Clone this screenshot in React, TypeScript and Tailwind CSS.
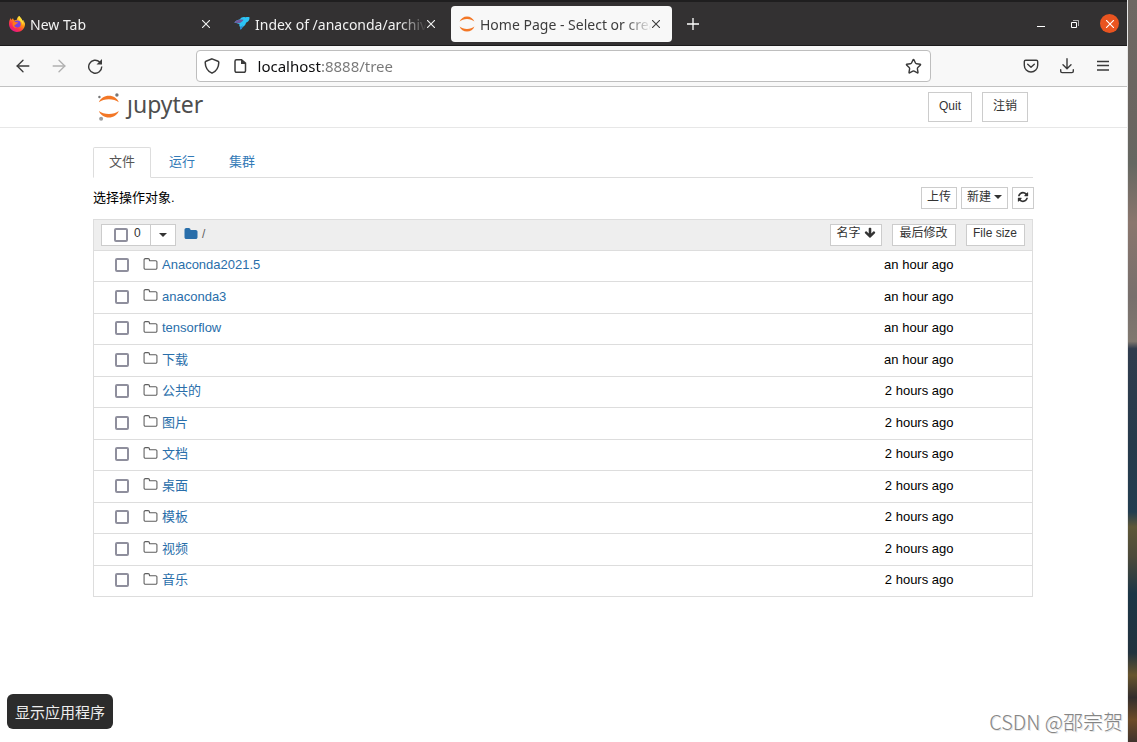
import { useState, type ReactNode } from 'react'
import { ArrowLeft, ArrowRight, Star } from 'lucide-react'

interface FileEntry {
  name: string
  modified: string
}

const files: FileEntry[] = [
  { name: 'Anaconda2021.5', modified: 'an hour ago' },
  { name: 'anaconda3', modified: 'an hour ago' },
  { name: 'tensorflow', modified: 'an hour ago' },
  { name: '下载', modified: 'an hour ago' },
  { name: '公共的', modified: '2 hours ago' },
  { name: '图片', modified: '2 hours ago' },
  { name: '文档', modified: '2 hours ago' },
  { name: '桌面', modified: '2 hours ago' },
  { name: '模板', modified: '2 hours ago' },
  { name: '视频', modified: '2 hours ago' },
  { name: '音乐', modified: '2 hours ago' },
]

// Font Awesome 4 glyphs, all on a 1792 grid
const glyphs = {
  folder:
    'M1728 608v704q0 92-66 158t-158 66h-1216q-92 0-158-66t-66-158v-960q0-92 66-158t158-66h320q92 0 158 66t66 158v32h672q92 0 158 66t66 158z',
  folderOpen:
    'M1600 1312v-704q0-40-28-68t-68-28h-704q-40 0-68-28t-28-68v-64q0-40-28-68t-68-28h-320q-40 0-68 28t-28 68v960q0 40 28 68t68 28h1216q40 0 68-28t28-68zm128-704v704q0 92-66 158t-158 66h-1216q-92 0-158-66t-66-158v-960q0-92 66-158t158-66h320q92 0 158 66t66 158v32h672q92 0 158 66t66 158z',
  arrowDown:
    'M1675 832q0 53-37 90l-651 652q-39 37-91 37-53 0-90-37l-651-652q-38-36-38-90 0-53 38-91l74-75q39-37 91-37 53 0 90 37l294 294v-704q0-52 38-90t90-38h128q52 0 90 38t38 90v704l294-294q37-37 90-37 52 0 91 37l75 75q37 39 37 91z',
  refresh:
    'M1639 1056q0 5-1 7-64 268-268 434.5t-478 166.5q-146 0-282.5-55t-243.5-157l-129 129q-19 19-45 19t-45-19-19-45v-448q0-26 19-45t45-19h448q26 0 45 19t19 45-19 45l-137 137q71 66 161 102t187 36q134 0 250-65t186-179q11-17 53-117 8-23 30-23h192q13 0 22.5 9.5t9.5 22.5zm25-800v448q0 26-19 45t-45 19h-448q-26 0-45-19t-19-45 19-45l138-138q-148-137-349-137-134 0-250 65t-186 179q-11 17-53 117-8 23-30 23h-199q-13 0-22.5-9.5t-9.5-22.5v-7q65-268 270-434.5t480-166.5q146 0 284 55.5t245 156.5l130-129q19-19 45-19t45 19 19 45z',
}

function Glyph({ name, className }: { name: keyof typeof glyphs; className: string }) {
  return (
    <svg className={`shrink-0 ${className}`} viewBox="0 0 1792 1792" fill="currentColor" aria-hidden="true">
      <path d={glyphs[name]} />
    </svg>
  )
}

function Caret() {
  return (
    <svg className="h-1 w-2 shrink-0" viewBox="0 0 8 4" fill="currentColor" aria-hidden="true">
      <path d="M0 0h8L4 4z" />
    </svg>
  )
}

function FirefoxIcon() {
  return (
    <svg className="size-4 shrink-0" viewBox="0 0 16 16" aria-hidden="true">
      <defs>
        <linearGradient id="fox" x1="0.8" y1="0.1" x2="0.2" y2="0.9">
          <stop offset="0" stopColor="#fff44f" />
          <stop offset="0.35" stopColor="#ff980e" />
          <stop offset="0.7" stopColor="#ff3647" />
          <stop offset="1" stopColor="#e31587" />
        </linearGradient>
      </defs>
      <path
        d="M15.4 6.2c-.3-.9-1-1.800-1.700-2.100.5 1 .8 1.900.9 2.500-.9-2.200-2.400-3.100-3.600-5L10.200 0C8.600.9 8 2.700 7.900 3.700c-.9 0-1.700.3-2.400.7-.8-.3-1.300-1.200-1.400-2.200C3.300 2.600 2.600 3.300 2.200 4c-.3-.3-.3-1.600-.3-1.900C.7 3.200 0 5.500 0 8.100 0 12.500 3.600 16 8 16s8-3.500 8-8c0-.600-.2-1.200-.6-1.800z"
        fill="url(#fox)"
      />
      <circle cx="8.300" cy="8" r="3.400" fill="#7542e5" />
      <path d="M4 6.200c1.200-.8 2.400-.7 3.400.1l1.800.2c0 .7-.9 1-1.700 1.200-.6.900-1.300 1.400-2.300 1.600.2 1.500 1.600 2.400 3 2.300-3 1.300-5.700-2.100-4.200-5.400z" fill="#ff7a18" />
      <path d="M10.200 0c2.700 2.800 4.400 5.300 3.800 9.300-.3-2.300-1.600-4.300-3.900-5.400C9.200 3.300 9.400 1.400 10.200 0z" fill="#ffde3a" />
    </svg>
  )
}

function AnacondaIcon() {
  return (
    <svg className="size-4 shrink-0" viewBox="0 0 16 16" aria-hidden="true">
      <path d="M.3 6.500C2 4.500 4 3.700 6 3.300 7 1.500 9 .8 11 1.200c1.500.1 3-.3 4.500 0 .3 2.500-.8 4.300-3.500 5.600-.2 1.800-1.500 3.200-3.700 4.600-.5 1-.9 1.700-1.800 2.100-.5-.8-.4-1.700-.2-2.700-1-.3-1.200-1.200-.8-2.600C4 7.700 2 7 .3 6.500z" fill="#2cc4f5" />
      <path d="M.3 6.500C2.500 4 5.500 3.200 9.500 3.800 8.500 5.700 7.300 6.300 5.600 7.200 3.800 7.300 2 7 .3 6.500z" fill="#6e5a9e" />
      <path d="M6.300 10.800c1-.2 1.700-.8 2.500-1.800l-.5 2.400c-.5 1-.9 1.700-1.800 2.100-.5-.8-.4-1.700-.2-2.700z" fill="#2f86cf" />
    </svg>
  )
}

function JupyterIcon() {
  return (
    <svg className="size-4 shrink-0" viewBox="0 0 16 16" fill="#f37726" aria-hidden="true">
      <path d="M.6 5.600C1.800 2.400 4.600.4 8 .4s6.200 2 7.400 5.200C13.500 4 11 3.100 8 3.100S2.500 4 .6 5.600z" />
      <path d="M.6 10.400c1.200 3.200 4 5.200 7.400 5.200s6.200-2 7.400-5.200c-1.900 1.600-4.400 2.500-7.400 2.500s-5.500-.9-7.400-2.500z" />
    </svg>
  )
}

function CloseMark() {
  return (
    <svg className="size-2" viewBox="0 0 8 8" stroke="currentColor" strokeWidth="1.1" aria-hidden="true">
      <path d="M0 0l8 8M8 0L0 8" />
    </svg>
  )
}

interface BrowserTabProps {
  title: string
  icon: ReactNode
  active?: boolean
}

function BrowserTab({ title, icon, active = false }: BrowserTabProps) {
  return (
    <div
      className={`flex h-9 w-[221px] items-center rounded pr-3 pl-2 ${
        active ? 'bg-[#f8f8f8] text-[#3d3d3d]' : 'text-[#f2f2f2]'
      }`}
    >
      {icon}
      <button
        type="button"
        className="ml-[5px] min-w-0 flex-1 overflow-hidden pt-0.5 text-left text-sm whitespace-nowrap [mask-image:linear-gradient(to_right,#000_calc(100%-28px),transparent)]"
      >
        {title}
      </button>
      <button type="button" aria-label={`Close ${title}`}>
        <CloseMark />
      </button>
    </div>
  )
}

function TitleBar() {
  return (
    <header className="flex h-[46px] items-center border-t-2 border-b border-t-[#1f1e1f] border-b-[#1c1b1c] bg-[#333132] pl-px text-white">
      <div className="flex gap-1">
        <BrowserTab title="New Tab" icon={<FirefoxIcon />} />
        <BrowserTab title="Index of /anaconda/archive" icon={<AnacondaIcon />} />
        <BrowserTab title="Home Page - Select or create" icon={<JupyterIcon />} active />
      </div>
      <button type="button" className="ml-[15px]" aria-label="New tab">
        <svg className="size-3" viewBox="0 0 12 12" stroke="currentColor" strokeWidth="1.300" aria-hidden="true">
          <path d="M6 0v12M0 6h12" />
        </svg>
      </button>
      <div className="ml-auto flex items-center pr-2">
        <button type="button" className="flex size-[34px] items-center justify-center" aria-label="Minimize">
          <svg className="size-2" viewBox="0 0 8 8" fill="currentColor" aria-hidden="true">
            <path d="M0 6h8v1H0z" />
          </svg>
        </button>
        <button type="button" className="mr-2 flex size-[34px] items-center justify-center" aria-label="Restore">
          <svg className="size-2" viewBox="0 0 8 8" fill="none" stroke="currentColor" aria-hidden="true">
            <path d="M.5 2.500h5v5h-5z" />
            <path d="M2 .5h5.500V6" opacity="0.600" />
          </svg>
        </button>
        <button
          type="button"
          className="flex size-[19px] items-center justify-center rounded-full bg-[#e95420]"
          aria-label="Close window"
        >
          <CloseMark />
        </button>
      </div>
    </header>
  )
}

function Toolbar() {
  const [url, setUrl] = useState('localhost:8888/tree')

  return (
    <div className="flex h-[41px] items-center border-b border-[#c2c2c2] bg-[#f8f8f8] px-[15px] text-[#3a3a3a]">
      <nav className="flex flex-1 gap-5">
        <button type="button" aria-label="Back">
          <ArrowLeft className="size-4 scale-125" strokeWidth={1.6} />
        </button>
        <button type="button" className="text-[#b0b0b0]" aria-label="Forward">
          <ArrowRight className="size-4 scale-125" strokeWidth={1.6} />
        </button>
        <button type="button" aria-label="Reload">
          <svg className="size-4" viewBox="0 0 16 16" fill="none" stroke="currentColor" strokeWidth="1.400" aria-hidden="true">
            <path d="M14.700 8.500A6.500 6.500 0 1 1 12.700 4" />
            <path d="M9.500 6.500h5.500V1z" fill="currentColor" stroke="none" />
          </svg>
        </button>
      </nav>
      <form
        className="flex h-8 w-[67%] items-center rounded border border-[#bebebe] bg-white pr-2 pl-[7px]"
        onSubmit={(e) => e.preventDefault()}
      >
        <svg className="size-4 shrink-0" viewBox="0 0 16 16" fill="none" stroke="currentColor" strokeWidth="1.500" aria-hidden="true">
          <path d="M8 .9l6 2.400c.5.200.8.600.8 1.100C14.700 9.500 12.500 13 8 15.200 3.500 13 1.300 9.500 1.200 4.400c0-.5.300-.9.8-1.100z" />
        </svg>
        <svg className="ml-3 size-4 shrink-0" viewBox="0 0 16 16" fill="none" stroke="currentColor" strokeWidth="1.500" aria-hidden="true">
          <path d="M9.500 1.700h-5a1.500 1.500 0 0 0-1.500 1.500v9.600a1.500 1.500 0 0 0 1.500 1.500h7.500a1.500 1.500 0 0 0 1.500-1.500V5.200z" />
          <path d="M9 1.200v4.800h5z" fill="currentColor" stroke="none" />
        </svg>
        <input
          type="text"
          aria-label="Address"
          value={url}
          onChange={(e) => setUrl(e.target.value)}
          className="ml-2.5 min-w-0 flex-1 bg-[linear-gradient(to_right,#0c0c0d_64px,#777_64px)] bg-clip-text text-[15px] text-transparent outline-none"
        />
        <button type="button" aria-label="Bookmark this page">
          <Star className="size-[17px]" strokeWidth={2} />
        </button>
      </form>
      <div className="flex flex-1 justify-end gap-5 pr-px">
        <button type="button" aria-label="Save to Pocket">
          <svg className="size-4" viewBox="0 0 16 16" fill="none" stroke="currentColor" strokeWidth="1.400" strokeLinecap="round" strokeLinejoin="round" aria-hidden="true">
            <path d="M2.700 2.200h10.600c.8 0 1.400.6 1.400 1.400v3.700a6.700 6.700 0 0 1-13.400 0V3.600c0-.8.600-1.400 1.400-1.400z" />
            <path d="M4.700 6.300L8 9.300l3.300-3" />
          </svg>
        </button>
        <button type="button" aria-label="Downloads">
          <svg className="size-4" viewBox="0 0 16 16" fill="none" stroke="currentColor" strokeWidth="1.400" strokeLinecap="round" strokeLinejoin="round" aria-hidden="true">
            <path d="M8 .8v9.700M4 6.800l4 3.900 4-3.900M1.700 11.700v1.500c0 .8.600 1.400 1.400 1.400h9.800c.8 0 1.400-.6 1.400-1.400v-1.500" />
          </svg>
        </button>
        <button type="button" aria-label="Menu">
          <svg className="size-4" viewBox="0 0 16 16" stroke="currentColor" strokeWidth="1.300" aria-hidden="true">
            <path d="M2 3.500h12M2 7.500h12M2 12h12" />
          </svg>
        </button>
      </div>
    </div>
  )
}

function JupyterLogo() {
  return (
    <a href="#" className="flex items-center gap-[7px] text-[#4e4e4e]" aria-label="jupyter">
      <svg className="h-7 w-[22px]" viewBox="0 0 22 28" aria-hidden="true">
        <path d="M.9 9.200C2.500 5.200 6.300 2.700 10.900 2.700s8.300 2.500 9.900 6.500c-2.500-2-6-3-9.900-3s-7.500 1-10 3z" fill="#f37726" />
        <path d="M.9 18c1.600 4 5.400 6.500 10 6.500s8.300-2.500 9.900-6.500c-2.500 2-6 3-9.900 3s-7.500-1-10-3z" fill="#f37726" />
        <circle cx="18.900" cy="2" r="1.700" fill="#767677" />
        <circle cx="1.400" cy="4" r="1.200" fill="#767677" />
        <circle cx="3.100" cy="25.700" r="2" fill="#9e9e9e" />
      </svg>
      <span className="pb-1.5 text-[23px] leading-7">ȷupyter</span>
    </a>
  )
}

const smallButton = 'flex h-[22px] items-center border border-[#ccc] bg-white px-[5px] text-xs text-[#333]'
const checkbox = 'size-3.5 shrink-0 appearance-none rounded-[2px] border-2 border-[#8f8f9d] bg-white checked:bg-[#0060df]'

function NotebookHeader() {
  const button = 'h-[30px] border border-[#ccc] bg-white px-2.5 pb-0.5 text-xs text-[#333]'
  return (
    <div className="border-b border-[#e7e7e7]">
      <div className="mx-auto flex h-10 w-full max-w-[941px] items-center justify-between pr-1.5 pl-[5px]">
        <JupyterLogo />
        <div className="flex gap-2.5 font-['Liberation_Sans','Noto_Sans_CJK_SC',sans-serif]">
          <button type="button" className={button}>
            Quit
          </button>
          <button type="button" className={button}>
            注销
          </button>
        </div>
      </div>
    </div>
  )
}

function NotebookTabs() {
  return (
    <ul className="mr-px flex gap-0.5 border-b border-[#ddd]">
      <li>
        <a
          href="#notebooks"
          className="-mb-px flex h-[31px] items-center rounded-t-[2px] border border-[#ddd] border-b-white bg-white px-[15px] pb-0.5 text-[#555]"
        >
          文件
        </a>
      </li>
      {['运行', '集群'].map((label) => (
        <li key={label}>
          <a href="#running" className="flex h-[30px] items-center px-4 pb-px text-[#337ab7]">
            {label}
          </a>
        </li>
      ))}
    </ul>
  )
}

function FileTable() {
  return (
    <table className="w-full border-collapse border border-[#ddd]">
      <thead>
        <tr className="h-[31px] bg-[#eee]">
          <th className="p-0 font-normal">
            <div className="flex items-center pl-[7px]">
              <div className="flex">
                <label className={`${smallButton} w-[50px] pl-3`}>
                  <input type="checkbox" className={checkbox} aria-label="Select all" />
                  <span className="ml-1.5 pb-1">0</span>
                </label>
                <button type="button" className={`${smallButton} -ml-px w-[26px] justify-center`} aria-label="Select menu">
                  <Caret />
                </button>
              </div>
              <a href="#home" className="ml-2 pb-0.5 text-[#296eaa]" aria-label="Home">
                <Glyph name="folder" className="size-3.5" />
              </a>
              <span className="ml-1 pb-0.5 text-xs text-[#5e5e5e]">/</span>
              <button type="button" className={`${smallButton} ml-auto gap-[3px] pb-1`}>
                名字
                <Glyph name="arrowDown" className="size-3" />
              </button>
            </div>
          </th>
          <th className="w-[74px] p-0 font-normal">
            <button type="button" className={`${smallButton} ml-auto w-16 justify-center pb-1 whitespace-nowrap`}>
              最后修改
            </button>
          </th>
          <th className="w-[77px] p-0 font-normal">
            <button type="button" className={`${smallButton} ml-2.5 w-[59px] justify-center pb-1 whitespace-nowrap`}>
              File size
            </button>
          </th>
        </tr>
      </thead>
      <tbody>
        {files.map((file) => (
          <tr key={file.name} className="border-t border-[#ddd] odd:h-[31px] even:h-8">
            <td className="p-0 pb-0.5">
              <div className="flex items-center pl-[21px]">
                <input type="checkbox" className={checkbox} aria-label={file.name} />
                <Glyph name="folderOpen" className="mb-0.5 ml-3.5 size-[15px] text-[#5e5e5e]" />
                <a href="#open" className="ml-1 text-[#296eaa]">
                  {file.name}
                </a>
              </div>
            </td>
            <td className="p-0 pr-0.5 pb-0.5 text-right whitespace-nowrap">{file.modified}</td>
            <td className="p-0" />
          </tr>
        ))}
      </tbody>
    </table>
  )
}

export default function App() {
  return (
    <div className="relative flex min-h-screen bg-white font-['Noto_Sans','Noto_Sans_CJK_SC',sans-serif]">
      <div className="min-w-0 flex-1">
        <TitleBar />
        <Toolbar />
        <NotebookHeader />
        <main className="mx-auto w-full max-w-[941px] pt-[19px] font-['Liberation_Sans','Noto_Sans_CJK_SC',sans-serif] text-[13px] leading-[18px] text-black">
          <NotebookTabs />
          <div className="flex items-center justify-between pt-[9px] pb-2.5">
            <p>选择操作对象.</p>
            <div className="flex gap-1">
              <button type="button" className={`${smallButton} pb-0.5`}>
                上传
              </button>
              <button type="button" className={`${smallButton} gap-[3px] pb-0.5`}>
                新建
                <Caret />
              </button>
              <button type="button" className={`${smallButton} w-[22px] justify-center pb-0.5`} aria-label="Refresh">
                <Glyph name="refresh" className="size-3" />
              </button>
            </div>
          </div>
          <div className="pr-px">
            <FileTable />
          </div>
        </main>
      </div>

      {/* slice of desktop wallpaper behind the window */}
      <div className="w-2.5 shrink-0 border-l border-[#e8e8e8] bg-[linear-gradient(#6e6863_0%,#6a6560_16%,#656761_22%,#8a766d_30%,#776f6c_40%,#80786f_46%,#303c4d_47%,#263a4b_60%,#233d50_69%,#5e5738_71%,#4c4a3a_75%,#1c3646_80%,#22323e_88%,#67542d_91%,#332d2c_94%,#6d4b28_97%,#40332d_100%)]" />

      <div className="absolute bottom-[13px] left-[7px] flex h-[35px] items-center rounded-md bg-[#2c2c2c] px-2 pt-0.5 font-['Noto_Sans_CJK_SC',sans-serif] text-[15px] text-[#eee]">
        显示应用程序
      </div>
      <div className="absolute right-3.5 bottom-1.5 font-['Noto_Sans_CJK_SC',sans-serif] text-xl font-light text-[#858585] [text-shadow:1px_1px_0_#e4e4e4]">
        CSDN @邵宗贺
      </div>
    </div>
  )
}
